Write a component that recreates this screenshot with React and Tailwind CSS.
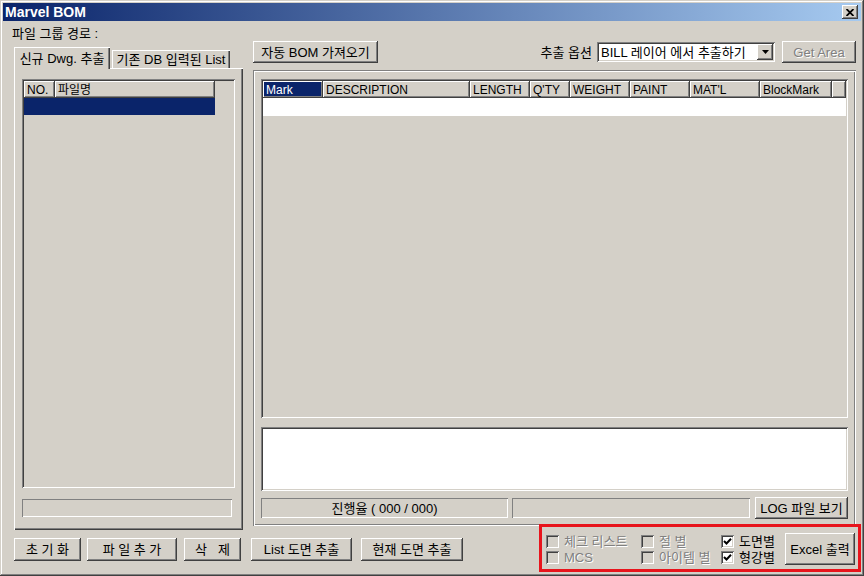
import React from "react";

const RAISED =
  "shadow-[inset_-1px_-1px_#404040,inset_1px_1px_#ffffff,inset_-2px_-2px_#808080,inset_2px_2px_#d4d0c8]";
const SUNKEN =
  "shadow-[inset_1px_1px_#808080,inset_-1px_-1px_#ffffff,inset_2px_2px_#404040,inset_-2px_-2px_#d4d0c8]";
const THIN = "shadow-[inset_1px_1px_#808080,inset_-1px_-1px_#ffffff]";
const HDR =
  "shadow-[inset_-1px_-1px_#404040,inset_1px_1px_#ffffff,inset_-2px_-2px_#808080]";
const DIS = "text-[#808080] [text-shadow:1px_1px_0_#ffffff]";

function Btn({ className = "", children, disabled }) {
  return (
    <div
      className={`flex shrink-0 items-center justify-center whitespace-pre bg-[#d4d0c8] ${RAISED} ${
        disabled ? DIS : ""
      } ${className}`}
    >
      {children}
    </div>
  );
}

function H({ className = "", children, sel }) {
  return (
    <div
      className={`flex h-full shrink-0 items-center pl-[3px] text-[12px] whitespace-pre ${HDR} ${
        sel ? "bg-[#0a246a] text-white" : ""
      } ${className}`}
    >
      {children}
    </div>
  );
}

function Check({ checked, disabled, label, className = "" }) {
  return (
    <div className={`flex h-[13px] items-center ${className}`}>
      <div
        className={`flex h-[13px] w-[13px] shrink-0 items-center justify-center ${SUNKEN} ${
          checked ? "bg-white" : "bg-[#d4d0c8]"
        }`}
      >
        {checked && (
          <svg width="9" height="9" viewBox="0 0 9 9">
            <path d="M1 4 L3.5 6.5 L8 1.8" stroke="#000" strokeWidth="2" fill="none" />
          </svg>
        )}
      </div>
      <span className={`ml-[5px] whitespace-pre ${disabled ? DIS : "text-black"}`}>{label}</span>
    </div>
  );
}

export default function App() {
  return (
    <div className="flex h-[576px] w-[864px] flex-col overflow-hidden bg-[#d4d0c8] p-[3px] font-['Liberation_Sans','Noto_Sans_CJK_KR',sans-serif] text-[13px] leading-none text-black shadow-[inset_-1px_-1px_#404040,inset_1px_1px_#d4d0c8,inset_-2px_-2px_#808080,inset_2px_2px_#ffffff]">
      {/* Title bar */}
      <div className="flex h-[18px] shrink-0 items-center justify-between bg-[linear-gradient(to_right,#0a246a,#a6caf0)] pl-[2px] pr-[3px]">
        <span className="text-[14px] font-bold text-white">Marvel BOM</span>
        <div className={`flex h-[14px] w-[16px] items-center justify-center bg-[#d4d0c8] ${RAISED}`}>
          <svg width="8" height="7" viewBox="0 0 8 7">
            <path d="M0.5 0 L7.5 7 M7.5 0 L0.5 7" stroke="#000" strokeWidth="1.8" />
          </svg>
        </div>
      </div>

      {/* Body */}
      <div className="flex h-[509px] shrink-0 pl-[11px]">
        {/* Left column */}
        <div className="flex w-[229px] shrink-0 flex-col">
          <div className="-ml-[2px] mt-[5px] flex h-[14px] items-center">파일 그룹 경로 :</div>
          <div className="relative z-10 mt-[7px] flex h-[21px] items-end">
            <div className="-mb-[1px] flex h-[22px] w-[96px] items-center justify-center bg-[#d4d0c8] shadow-[inset_1px_1px_#ffffff,inset_-1px_0_#404040,inset_-2px_0_#808080]">
              신규 Dwg. 추출
            </div>
            <div className="ml-[2px] flex h-[18px] w-[118px] items-center justify-center whitespace-pre bg-[#d4d0c8] shadow-[inset_1px_1px_#ffffff,inset_-1px_0_#404040,inset_-2px_0_#808080]">
              기존 DB 입력된 List
            </div>
          </div>
          <div className="flex h-[462px] flex-col bg-[#d4d0c8] px-[8px] pt-[11px] shadow-[inset_1px_1px_#ffffff,inset_-1px_-1px_#404040,inset_-2px_-2px_#808080]">
            <div className={`h-[409px] w-[213px] p-[2px] ${SUNKEN}`}>
              <div className="flex h-[17px]">
                <H className="w-[31px]">NO.</H>
                <H className="w-[160px]">파일명</H>
              </div>
              <div className="h-[17px] w-[191px] bg-[#0a246a]" />
            </div>
            <div className={`mt-[11px] h-[18px] w-[210px] ${THIN}`} />
          </div>
        </div>

        {/* Right column */}
        <div className="ml-[10px] flex w-[603px] shrink-0 flex-col">
          <div className="mt-[20px] flex h-[22px] items-center">
            <Btn className="h-[22px] w-[125px]">자동 BOM 가져오기</Btn>
            <span className="ml-auto mr-[5px]">추출 옵션</span>
            <div className={`flex h-[20px] w-[178px] items-center bg-white p-[2px] ${SUNKEN}`}>
              <span className="flex-1 overflow-hidden pl-[2px] whitespace-pre">BILL 레이어 에서 추출하기</span>
              <div className={`flex h-[16px] w-[16px] shrink-0 items-center justify-center bg-[#d4d0c8] ${RAISED}`}>
                <svg width="7" height="4" viewBox="0 0 7 4">
                  <path d="M0 0 H7 L3.5 4 Z" fill="#000" />
                </svg>
              </div>
            </div>
            <Btn disabled className="ml-[7px] h-[22px] w-[74px]">
              Get Area
            </Btn>
          </div>

          <div className="mt-[7px] flex h-[456px] flex-col px-[8px] pt-[9px] shadow-[inset_1px_1px_#808080,inset_2px_2px_#ffffff,inset_-1px_-1px_#ffffff,inset_-2px_-2px_#808080]">
            <div className={`h-[339px] p-[2px] ${SUNKEN}`}>
              <div className="flex h-[17px]">
                <H sel className="w-[60px]">Mark</H>
                <H className="w-[147px]">DESCRIPTION</H>
                <H className="w-[60px]">LENGTH</H>
                <H className="w-[40px]">Q'TY</H>
                <H className="w-[60px]">WEIGHT</H>
                <H className="w-[60px]">PAINT</H>
                <H className="w-[70px]">MAT'L</H>
                <H className="w-[72px]">BlockMark</H>
                <H className="flex-1 shrink" />
              </div>
              <div className="h-[18px] bg-white" />
            </div>
            <div className={`mt-[9px] h-[64px] bg-white ${SUNKEN}`} />
            <div className="mt-[6px] flex h-[22px] items-center">
              <div className={`flex h-[20px] w-[247px] items-center justify-center whitespace-pre ${THIN}`}>
                진행율 ( 000 / 000)
              </div>
              <div className={`ml-[4px] h-[20px] w-[238px] ${THIN}`} />
              <Btn className="ml-[5px] h-[22px] w-[93px]">LOG 파일 보기</Btn>
            </div>
          </div>
        </div>
      </div>

      {/* Bottom row */}
      <div className="mt-[8px] flex items-start pl-[11px]">
        <Btn className="h-[23px] w-[67px]">초 기 화</Btn>
        <Btn className="ml-[6px] h-[23px] w-[90px]">파 일 추 가</Btn>
        <Btn className="ml-[7px] h-[23px] w-[57px]">삭   제</Btn>
        <Btn className="ml-[10px] h-[23px] w-[101px]">List 도면 추출</Btn>
        <Btn className="ml-[9px] h-[23px] w-[102px]">현재 도면 추출</Btn>

        <div className="-mt-[14px] ml-auto flex h-[48px] w-[322px] border-[3px] border-[#e8141c] pl-[4px]">
          <div className="mt-[8px] flex w-[95px] flex-col gap-[3px]">
            <Check disabled label="체크 리스트" />
            <Check disabled label="MCS" />
          </div>
          <div className="mt-[8px] flex w-[80px] flex-col gap-[3px]">
            <Check disabled label="절 별" />
            <Check disabled label="아이템 별" />
          </div>
          <div className="mt-[8px] flex w-[64px] flex-col gap-[3px]">
            <Check checked label="도면별" />
            <Check checked label="형강별" />
          </div>
          <Btn className="mt-[6px] h-[32px] w-[70px]">Excel 출력</Btn>
        </div>
      </div>
    </div>
  );
}
